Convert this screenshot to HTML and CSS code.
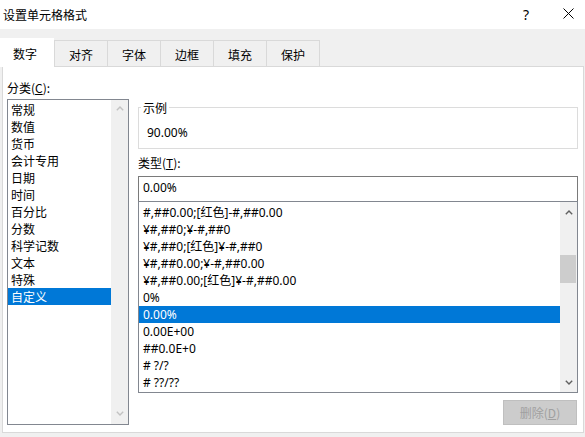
FILE: index.html
```html
<!DOCTYPE html>
<html lang="zh-CN">
<head>
<meta charset="utf-8">
<title>设置单元格格式</title>
<link rel="stylesheet" href="styles.css">
</head>
<body>
<div class="dialog">
  <div class="titlebar">
    <span class="title">设置单元格格式</span>
    <span class="help">?</span>
    <span class="close">
      <svg width="11" height="11" viewBox="0 0 11 11"><path d="M0.5 0.5 L10.5 10.5 M10.5 0.5 L0.5 10.5" stroke="#000" stroke-width="1" fill="none"/></svg>
    </span>
  </div>
  <div class="tabstrip">
    <div class="tab active">数字</div>
    <div class="tab">对齐</div>
    <div class="tab">字体</div>
    <div class="tab">边框</div>
    <div class="tab">填充</div>
    <div class="tab">保护</div>
  </div>
  <div class="panel">
    <div class="leftcol">
      <div class="label">分类(<u>C</u>):</div>
      <div class="listbox catlist">
        <div class="items">
          <div class="item">常规</div>
          <div class="item">数值</div>
          <div class="item">货币</div>
          <div class="item">会计专用</div>
          <div class="item">日期</div>
          <div class="item">时间</div>
          <div class="item">百分比</div>
          <div class="item">分数</div>
          <div class="item">科学记数</div>
          <div class="item">文本</div>
          <div class="item">特殊</div>
          <div class="item selected">自定义</div>
        </div>
        <div class="scrollbar">
          <div class="arrow cat-arrow"><svg width="8" height="5" viewBox="0 0 8 5"><path d="M0.8 4.3 L4 1.1 L7.2 4.3" stroke="#c2c2c2" stroke-width="1.4" fill="none"/></svg></div>
          <div class="track"></div>
          <div class="arrow cat-arrow down"><svg width="8" height="5" viewBox="0 0 8 5"><path d="M0.8 0.7 L4 3.9 L7.2 0.7" stroke="#c2c2c2" stroke-width="1.4" fill="none"/></svg></div>
        </div>
      </div>
    </div>
    <div class="rightcol">
      <fieldset class="sample">
        <legend>示例</legend>
        <div class="sample-value">90.00%</div>
      </fieldset>
      <div class="label type-label">类型(<u>T</u>):</div>
      <div class="typeinput">0.00%</div>
      <div class="listbox typelist">
        <div class="items">
          <div class="item">#,##0.00;[红色]-#,##0.00</div>
          <div class="item">¥#,##0;¥-#,##0</div>
          <div class="item">¥#,##0;[红色]¥-#,##0</div>
          <div class="item">¥#,##0.00;¥-#,##0.00</div>
          <div class="item">¥#,##0.00;[红色]¥-#,##0.00</div>
          <div class="item">0%</div>
          <div class="item selected">0.00%</div>
          <div class="item">0.00E+00</div>
          <div class="item">##0.0E+0</div>
          <div class="item"># ?/?</div>
          <div class="item"># ??/??</div>
        </div>
        <div class="scrollbar">
          <div class="arrow type-arrow"><svg width="8" height="5" viewBox="0 0 8 5"><path d="M0.8 4.3 L4 1.1 L7.2 4.3" stroke="#606060" stroke-width="1.4" fill="none"/></svg></div>
          <div class="track"><div class="thumb"></div></div>
          <div class="arrow type-arrow"><svg width="8" height="5" viewBox="0 0 8 5"><path d="M0.8 0.7 L4 3.9 L7.2 0.7" stroke="#606060" stroke-width="1.4" fill="none"/></svg></div>
        </div>
      </div>
      <div class="btnrow">
        <div class="button disabled">删除(<u>D</u>)</div>
      </div>
    </div>
  </div>
</div>
</body>
</html>
```
FILE: styles.css
```css
* { box-sizing: border-box; }
html, body {
  margin: 0;
  padding: 0;
}
body {
  width: 585px;
  height: 437px;
  overflow: hidden;
  background: #f0f0f0;
  font-family: "Noto Sans", "Noto Sans CJK SC", sans-serif;
  font-size: 12px;
  line-height: 17px;
  color: #000;
}
.dialog {
  display: flex;
  flex-direction: column;
}
.titlebar {
  height: 29px;
  background: #fff;
  display: flex;
  align-items: center;
}
.title {
  padding-left: 3px;
  font-family: "Noto Sans CJK SC", sans-serif;
  font-size: 12px;
  margin-top: -1px;
}
.help {
  margin-left: auto;
  width: 16px;
  text-align: center;
  font-size: 14px;
  margin-right: 29px;
  margin-top: -1px;
}
.close {
  width: 11px;
  height: 11px;
  margin-right: 11px;
  display: flex;
  margin-top: -2px;
}
.tabstrip {
  height: 37px;
  display: flex;
  align-items: flex-end;
  padding-left: 0;
  position: relative;
  z-index: 1;
}
.tab {
  height: 26px;
  width: 54px;
  margin-left: -1px;
  border: 1px solid #d9d9d9;
  border-bottom: none;
  background: #f0f0f0;
  font-family: "Noto Sans CJK SC", sans-serif;
  display: flex;
  align-items: center;
  justify-content: center;
  padding-top: 1px;
}
.tab.active {
  margin-left: 0;
  width: 54px;
  height: 29px;
  margin-bottom: -1px;
  background: #fff;
  border-color: #fff;
  padding-top: 0;
  padding-right: 4px;
}
.tab.active + .tab { margin-left: 0; }
.panel {
  margin-left: 2px;
  width: 582px;
  background: #fff;
  border: 1px solid #d9d9d9;
  display: flex;
  gap: 9px;
  padding: 12px 5px 7px 4px;
}
.leftcol {
  width: 122px;
  display: flex;
  flex-direction: column;
}
.label {
  height: 17px;
  font-family: "Noto Sans CJK SC", sans-serif;
  white-space: nowrap;
}
.label u { text-underline-offset: 1px; }
.catlist {
  margin-top: 3px;
  height: 326px;
}
.listbox {
  border: 1px solid #828790;
  display: flex;
  background: #fff;
}
.items {
  flex: 1;
  min-width: 0;
}
.catlist .items { padding-top: 1px; }
.typelist .items { padding-top: 2px; }
.item {
  height: 17px;
  white-space: nowrap;
}
.catlist .item {
  padding-left: 3px;
  font-family: "Noto Sans CJK SC", sans-serif;
}
.typelist .item { padding-left: 4px; }
.item.selected {
  background: #0078d7;
  color: #fff;
}
.scrollbar {
  width: 17px;
  background: #f0f0f0;
  display: flex;
  flex-direction: column;
}
.arrow {
  display: flex;
  align-items: center;
  justify-content: center;
}
.cat-arrow { height: 17px; }
.cat-arrow.down { margin-bottom: 2px; }
.type-arrow { height: 20px; }
.track { flex: 1; }
.thumb {
  margin: 33px 1px 0 0;
  height: 28px;
  background: #cdcdcd;
}
.rightcol {
  width: 440px;
  display: flex;
  flex-direction: column;
}
.sample {
  margin: 20px 0 0 0;
  min-width: 0;
  border: 1px solid #dcdcdc;
  padding: 8px 8px 7px 8px;
}
.sample legend {
  padding: 0 2px;
  margin-left: -6px;
  font-family: "Noto Sans CJK SC", sans-serif;
  line-height: 17px;
  color: #000;
}
.sample-value { height: 17px; }
.type-label { margin-top: 5px; }
.typeinput {
  margin-top: 5px;
  height: 25px;
  border: 1px solid #7a7a7a;
  border-bottom: none;
  padding: 2px 0 0 4px;
}
.typelist { height: 192px; }
.btnrow {
  display: flex;
  justify-content: flex-end;
  margin-top: 7px;
  padding-right: 1px;
}
.button {
  width: 74px;
  height: 25px;
  display: flex;
  align-items: center;
  justify-content: center;
  font-family: "Noto Sans CJK SC", sans-serif;
}
.button.disabled {
  background: #cccccc;
  border: 1px solid #bfbfbf;
  color: #a0a0a0;
}
```
